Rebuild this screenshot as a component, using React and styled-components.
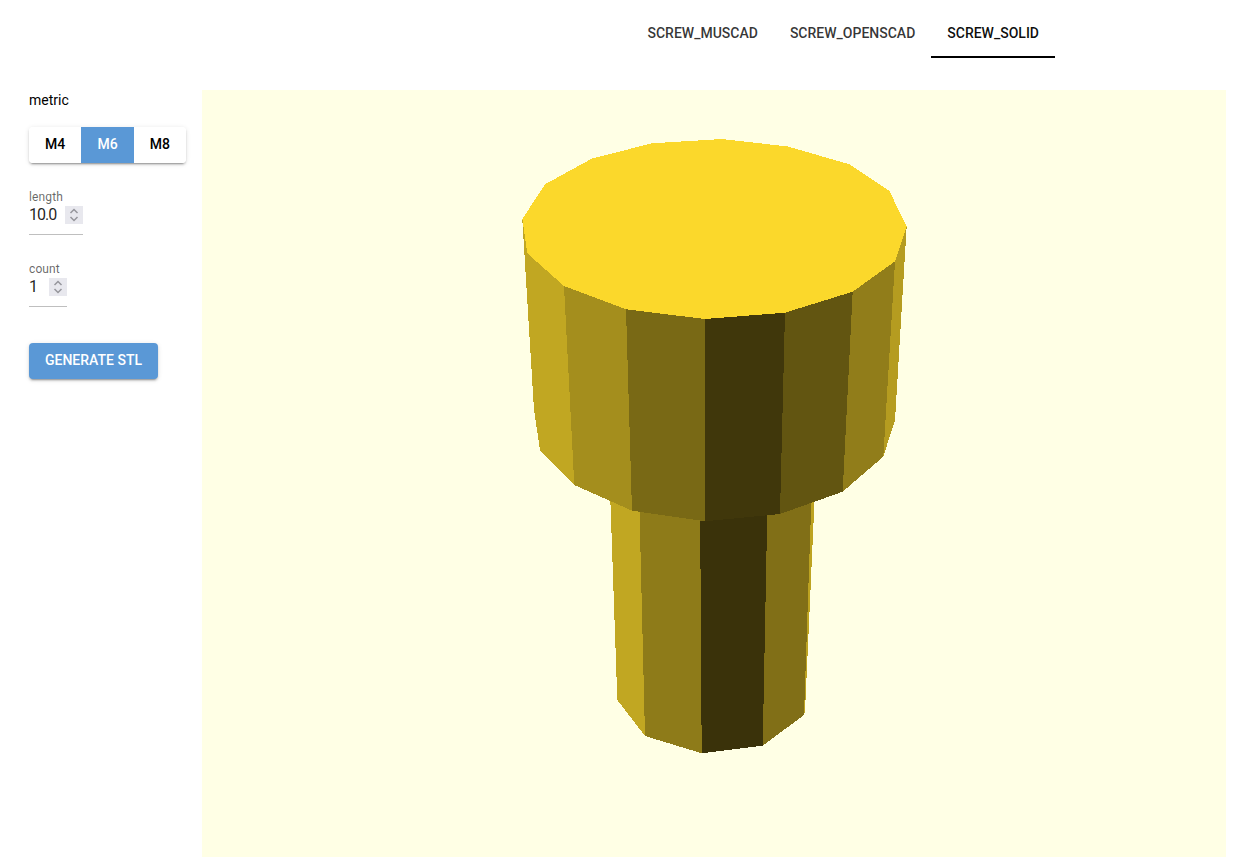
import React, { useState } from 'react';
import styled, { createGlobalStyle } from 'styled-components';

const GlobalStyle = createGlobalStyle`
  html, body {
    margin: 0;
    padding: 0;
    background: #fff;
    font-family: Roboto, "Liberation Sans", sans-serif;
  }
`;

const Page = styled.div`
  width: 1239px;
  height: 865px;
  overflow: hidden;
`;

const TabBar = styled.nav`
  display: flex;
  justify-content: flex-end;
  height: 58px;
  padding-right: 184px;
  margin-bottom: 32px;
`;

const Tab = styled.div`
  box-sizing: border-box;
  height: 58px;
  padding: 24px 16px 0;
  font-size: 14px;
  font-weight: 500;
  line-height: 18px;
  color: ${p => (p.$active ? 'rgba(0, 0, 0, 0.95)' : 'rgba(0, 0, 0, 0.8)')};
  border-bottom: 2px solid ${p => (p.$active ? '#000' : 'transparent')};
`;

const Main = styled.div`
  display: flex;
`;

const Sidebar = styled.aside`
  box-sizing: border-box;
  width: 202px;
  padding-left: 29px;
  display: flex;
  flex-direction: column;
  align-items: flex-start;
`;

const GroupLabel = styled.div`
  font-size: 14px;
  line-height: 20px;
  color: #000;
  margin-bottom: 17px;
`;

const ToggleGroup = styled.div`
  display: flex;
  border-radius: 4px;
  overflow: hidden;
  margin-bottom: 27px;
  box-shadow: 0 3px 1px -2px rgba(0, 0, 0, 0.2), 0 2px 2px 0 rgba(0, 0, 0, 0.14), 0 1px 5px 0 rgba(0, 0, 0, 0.12);
`;

const Toggle = styled.button`
  width: 52.33px;
  height: 36px;
  padding: 0 0 2px;
  border: 0;
  font-family: inherit;
  font-size: 14px;
  font-weight: 500;
  background: ${p => (p.$active ? '#5a98d6' : '#fff')};
  color: ${p => (p.$active ? '#fff' : '#000')};
`;

const Field = styled.label`
  display: block;
  margin-bottom: 27px;
`;

const FieldLabel = styled.span`
  display: block;
  font-size: 12px;
  line-height: 14px;
  letter-spacing: 0.12px;
  color: rgba(0, 0, 0, 0.6);
`;

const InputRow = styled.div`
  box-sizing: border-box;
  display: flex;
  align-items: flex-start;
  width: ${p => p.$width}px;
  height: 31px;
  padding-top: 2px;
  border-bottom: 1px solid rgba(0, 0, 0, 0.25);
`;

const NumberInput = styled.input`
  flex: 1;
  min-width: 0;
  height: 18px;
  padding: 0;
  border: 0;
  outline: none;
  background: transparent;
  font-family: inherit;
  font-size: 16px;
  line-height: 18px;
  letter-spacing: -1px;
  color: rgba(0, 0, 0, 0.87);
  appearance: textfield;

  &::-webkit-inner-spin-button {
    appearance: none;
    margin: 0;
  }
`;

const Spinner = styled.svg`
  flex: none;
  display: block;
  width: 18px;
  height: 18px;
  background: #e8e8ee;
`;

const GenerateButton = styled.button`
  width: 129px;
  height: 36px;
  margin-top: 9px;
  padding: 0 0 2px;
  border: 0;
  border-radius: 4px;
  background: #5a98d6;
  color: #fff;
  font-family: inherit;
  font-size: 14px;
  font-weight: 500;
  box-shadow: 0 3px 1px -2px rgba(0, 0, 0, 0.2), 0 2px 2px 0 rgba(0, 0, 0, 0.14), 0 1px 5px 0 rgba(0, 0, 0, 0.12);
`;

const Viewport = styled.div`
  width: 1024px;
  height: 767px;
  background: #ffffe5;
`;

const ScrewSvg = styled.svg`
  display: block;
  shape-rendering: crispEdges;
`;

// faces are in page order, back to front; viewport origin is 202,90 on the page
const faces = [
  // shaft, tops run on up behind the head
  ['#c1a722', '610,490 639,490 645,736 617.3,700'],
  ['#8e7b19', '639,490 700,490 701.7,753.3 645,736'],
  ['#3a320a', '700,490 767.7,490 762.7,745.7 701.7,753.3'],
  ['#816f17', '767.7,490 811.7,490 804,715 762.7,745.7'],
  ['#bda321', '811.7,490 815,490 805,711.7 804,715'],
  // head
  ['#c1a722', '522.3,219 527.3,253.3 564,286 574.3,485 540,450 534,410'],
  ['#a48e1d', '564,286 626,309.3 632,510.7 574.3,485'],
  ['#796915', '626,309.3 705,319 705,521.3 632,510.7'],
  ['#40370b', '705,319 785,312.7 780,514 705,521.3'],
  ['#625511', '785,312.7 852.7,291.7 842.7,491.7 780,514'],
  ['#917d1a', '852.7,291.7 895,261.3 883.3,456.7 842.7,491.7'],
  ['#b59c20', '895,261.3 906.7,226 895,420 883.3,456.7'],
  // top
  ['#fbd82b', '522.3,219 545,184.3 592,158.5 652,143.3 722,139 788,146.5 849.3,164.3 889.3,191 906.7,226 895,261.3 852.7,291.7 785,312.7 705,319 626,309.3 564,286 527.3,253.3'],
];

const Screw = () => (
  <ScrewSvg width="1024" height="767" viewBox="202 90 1024 767">
    {faces.map(([fill, points]) => (
      <polygon key={points} fill={fill} points={points} />
    ))}
  </ScrewSvg>
);

const SpinnerIcon = () => (
  <Spinner viewBox="0 0 18 18" fill="none" stroke="#96969c" strokeWidth="1.5">
    <path d="M5.5 7 9 3.5 12.5 7" />
    <path d="M5.5 11 9 14.5 12.5 11" />
  </Spinner>
);

const tabs = ['screw_muscad', 'screw_openscad', 'screw_solid'];
const metrics = ['M4', 'M6', 'M8'];

const App = () => {
  const [tab, setTab] = useState('screw_solid');
  const [metric, setMetric] = useState('M6');
  const [length, setLength] = useState('10.0');
  const [count, setCount] = useState('1');

  return (
    <Page>
      <GlobalStyle />
      <TabBar>
        {tabs.map(name => (
          <Tab key={name} $active={name === tab} onClick={() => setTab(name)}>
            {name.toUpperCase()}
          </Tab>
        ))}
      </TabBar>
      <Main>
        <Sidebar>
          <GroupLabel>metric</GroupLabel>
          <ToggleGroup>
            {metrics.map(m => (
              <Toggle key={m} $active={m === metric} onClick={() => setMetric(m)}>
                {m}
              </Toggle>
            ))}
          </ToggleGroup>
          <Field>
            <FieldLabel>length</FieldLabel>
            <InputRow $width={54}>
              <NumberInput type="number" step="0.1" value={length} onChange={e => setLength(e.target.value)} />
              <SpinnerIcon />
            </InputRow>
          </Field>
          <Field>
            <FieldLabel>count</FieldLabel>
            <InputRow $width={38}>
              <NumberInput type="number" value={count} onChange={e => setCount(e.target.value)} />
              <SpinnerIcon />
            </InputRow>
          </Field>
          <GenerateButton>GENERATE STL</GenerateButton>
        </Sidebar>
        <Viewport>
          <Screw />
        </Viewport>
      </Main>
    </Page>
  );
};

export default App;
